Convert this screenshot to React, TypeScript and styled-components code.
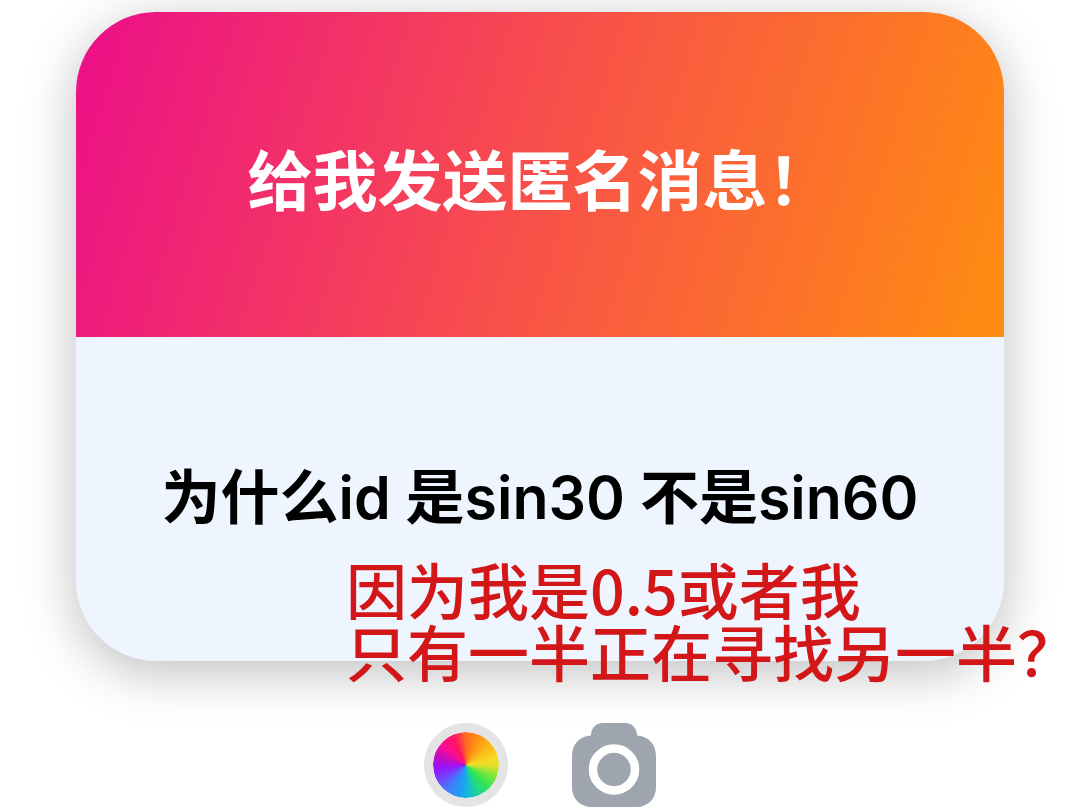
import React from "react";
import styled, { createGlobalStyle } from "styled-components";

const GlobalStyle = createGlobalStyle`
  * { box-sizing: border-box; }
  body {
    margin: 0;
    background: #fff;
    font-family: Inter, "Noto Sans CJK SC", sans-serif;
    overflow-x: hidden;
  }
`;

const Page = styled.main`
  display: flex;
  flex-direction: column;
  gap: 62px;
  padding: 12px 76px 0;
`;

const Card = styled.article`
  position: relative;
  border-radius: 80px;
  background: #eef5ff;
  box-shadow: 0 11px 52px rgba(0, 0, 0, 0.26);
`;

const Prompt = styled.header`
  display: flex;
  justify-content: center;
  align-items: center;
  padding: 117px 40px 112px;
  border-radius: 80px 80px 0 0;
  background: linear-gradient(107deg, #ec1187 2%, #f8504a 50%, #ff8d10 100%);
`;

const Title = styled.h1`
  margin: 0;
  font-family: "Noto Sans CJK SC", sans-serif;
  font-size: 65px;
  line-height: 96px;
  font-weight: 700;
  color: #fff;
  white-space: nowrap;
`;

const Message = styled.p`
  margin: 0;
  padding: 121px 40px 123px;
  font-size: 59px;
  line-height: 80px;
  font-weight: 600;
  color: #000;
  text-align: center;
  white-space: nowrap;
`;

const Reply = styled.p`
  position: absolute;
  left: 270px;
  bottom: -21px;
  margin: 0;
  font-family: "Noto Sans CJK SC", sans-serif;
  font-size: 61px;
  line-height: 62px;
  font-weight: 500;
  color: #d31718;
  white-space: nowrap;
`;

const Tools = styled.nav`
  display: flex;
  justify-content: center;
  gap: 64px;
`;

const ToolButton = styled.button`
  display: flex;
  width: 84px;
  height: 84px;
  padding: 0;
  border: 0;
  background: none;
  cursor: pointer;
`;

const ColorWheel = styled.span`
  flex: 1;
  border: 9px solid #e4e4e4;
  border-radius: 50%;
  background: conic-gradient(
    #ff6a20, #ff9414 25deg, #f6d820 75deg, #e2e02a 92deg, #8ee63a 108deg,
    #30e552 135deg, #20d88c 155deg, #14a8f0 185deg, #3e80fa 215deg,
    #7a38fc 245deg, #9a14fa 265deg, #c00cc0 285deg, #f80c98 308deg,
    #ff1464 335deg, #ff4440 350deg, #ff6a20
  ) border-box;
  background-clip: padding-box;
`;

function CameraIcon() {
  return (
    <svg width="84" height="84" viewBox="0 0 84 84" aria-hidden="true">
      <path
        fill="#9ea5af"
        d="M31 0H53C60 0 65 5 65 12.500C76 13 84 21 84 33V64C84 76 76 84 64 84H20C8 84 0 76 0 64V33C0 21 8 13 19 12.500C19 5 24 0 31 0Z"
      />
      <circle cx="42" cy="46.500" r="21" fill="none" stroke="#fff" strokeWidth="8.500" />
    </svg>
  );
}

export default function App() {
  return (
    <>
      <GlobalStyle />
      <Page>
        <Card>
          <Prompt>
            <Title>给我发送匿名消息！</Title>
          </Prompt>
          <Message>为什么id 是sin30 不是sin60</Message>
          <Reply>
            因为我是0.5或者我
            <br />
            只有一半正在寻找另一半？
          </Reply>
        </Card>
        <Tools aria-label="工具">
          <ToolButton type="button" aria-label="颜色">
            <ColorWheel />
          </ToolButton>
          <ToolButton type="button" aria-label="相机">
            <CameraIcon />
          </ToolButton>
        </Tools>
      </Page>
    </>
  );
}
